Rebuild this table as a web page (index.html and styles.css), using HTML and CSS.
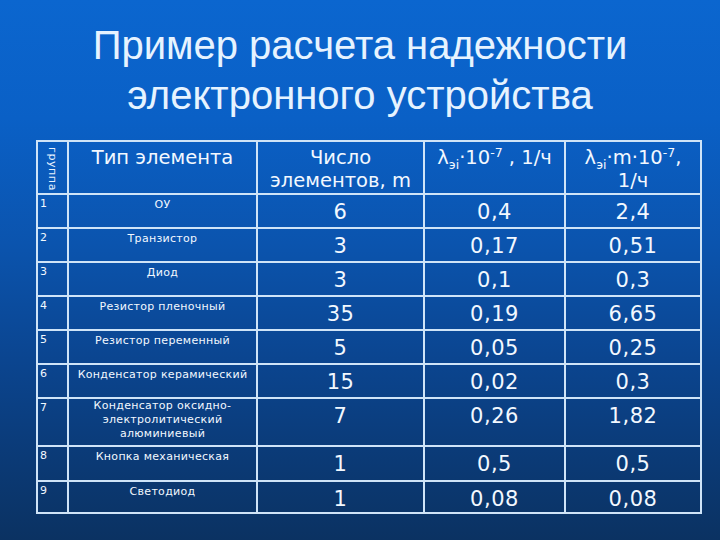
FILE: index.html
```html
<!DOCTYPE html>
<html lang="ru">
<head>
<meta charset="utf-8">
<title>Пример расчета надежности</title>
<link rel="stylesheet" href="styles.css">
</head>
<body>
<div class="slide">
  <h1 class="title">Пример расчета надежности<br>электронного устройства</h1>
  <table class="grid">
    <colgroup>
      <col class="c1"><col class="c2"><col class="c3"><col class="c4"><col class="c5">
    </colgroup>
    <thead>
      <tr class="hdr">
        <th class="grp"><span class="vert">группа</span></th>
        <th class="h">Тип элемента</th>
        <th class="h">Число<br>элементов, m</th>
        <th class="h lam">λ<sub>эi</sub>·10<sup>-7</sup> , 1/ч</th>
        <th class="h">λ<sub>эi</sub>·m·10<sup>-7</sup>,<br>1/ч</th>
      </tr>
    </thead>
    <tbody>
      <tr class="r"><td class="g">1</td><td class="t">ОУ</td><td class="n">6</td><td class="n">0,4</td><td class="n">2,4</td></tr>
      <tr class="r"><td class="g">2</td><td class="t">Транзистор</td><td class="n">3</td><td class="n">0,17</td><td class="n">0,51</td></tr>
      <tr class="r"><td class="g">3</td><td class="t">Диод</td><td class="n">3</td><td class="n">0,1</td><td class="n">0,3</td></tr>
      <tr class="r"><td class="g">4</td><td class="t">Резистор пленочный</td><td class="n">35</td><td class="n">0,19</td><td class="n">6,65</td></tr>
      <tr class="r"><td class="g">5</td><td class="t">Резистор переменный</td><td class="n">5</td><td class="n">0,05</td><td class="n">0,25</td></tr>
      <tr class="r"><td class="g">6</td><td class="t">Конденсатор керамический</td><td class="n">15</td><td class="n">0,02</td><td class="n">0,3</td></tr>
      <tr class="r7"><td class="g">7</td><td class="t multi">Конденсатор оксидно-<br>электролитический<br>алюминиевый</td><td class="n">7</td><td class="n">0,26</td><td class="n">1,82</td></tr>
      <tr class="r8"><td class="g">8</td><td class="t">Кнопка механическая</td><td class="n">1</td><td class="n">0,5</td><td class="n">0,5</td></tr>
      <tr class="r9"><td class="g">9</td><td class="t">Светодиод</td><td class="n">1</td><td class="n">0,08</td><td class="n">0,08</td></tr>
    </tbody>
  </table>
</div>
</body>
</html>
```

FILE: styles.css
```css
html, body {
  margin: 0;
  padding: 0;
}
body {
  width: 720px;
  height: 540px;
  overflow: hidden;
  background: linear-gradient(to bottom, #0b66cf 0%, #0a60c6 22%, #0b54ae 45%, #0b4692 65%, #0b3a76 85%, #0b3262 100%);
}
.slide {
  width: 720px;
  height: 540px;
  padding-top: 20px;
  box-sizing: border-box;
}
.title {
  margin: 0;
  font-family: "Liberation Sans", Arial, sans-serif;
  font-weight: normal;
  font-size: 40px;
  line-height: 50px;
  text-align: center;
  color: #e6f3ff;
}
.grid {
  margin: 20px 0 0 36px;
  border-collapse: collapse;
  table-layout: fixed;
  width: 664px;
  color: #f2f8ff;
  font-family: "DejaVu Sans", Verdana, sans-serif;
}
.c1 { width: 31px; }
.c2 { width: 189px; }
.c3 { width: 167px; }
.c4 { width: 141px; }
.c5 { width: 136px; }
.grid th, .grid td {
  border: 2px solid #cfe4f8;
  padding: 0;
  vertical-align: top;
}
.hdr { height: 53px; }
.r { height: 34px; }
.r7 { height: 48px; }
.r8 { height: 35px; }
.r9 { height: 32px; }
.grid .h {
  font-weight: normal;
  font-size: 19.5px;
  line-height: 23px;
  padding-top: 4px;
  text-align: center;
  white-space: nowrap;
}
.grid .h sub, .grid .h sup {
  font-size: 12.5px;
  line-height: 0;
}
.grid .grp {
  font-weight: normal;
  padding-top: 5px;
}
.vert {
  display: block;
  margin: 0 auto;
  writing-mode: vertical-rl;
  font-size: 11px;
  line-height: 13px;
  letter-spacing: 0.6px;
  color: #e8f2ff;
}
.grid .g {
  font-size: 11px;
  line-height: 13px;
  padding: 2px 0 0 2px;
}
.grid .t {
  font-size: 11px;
  line-height: 13px;
  padding-top: 3px;
  text-align: center;
  letter-spacing: 0.3px;
}
.grid .t.multi {
  line-height: 14px;
  padding-top: 0;
}
.grid .n {
  font-size: 21px;
  line-height: 24px;
  padding-top: 5px;
  text-align: center;
  letter-spacing: 0.5px;
}
```
